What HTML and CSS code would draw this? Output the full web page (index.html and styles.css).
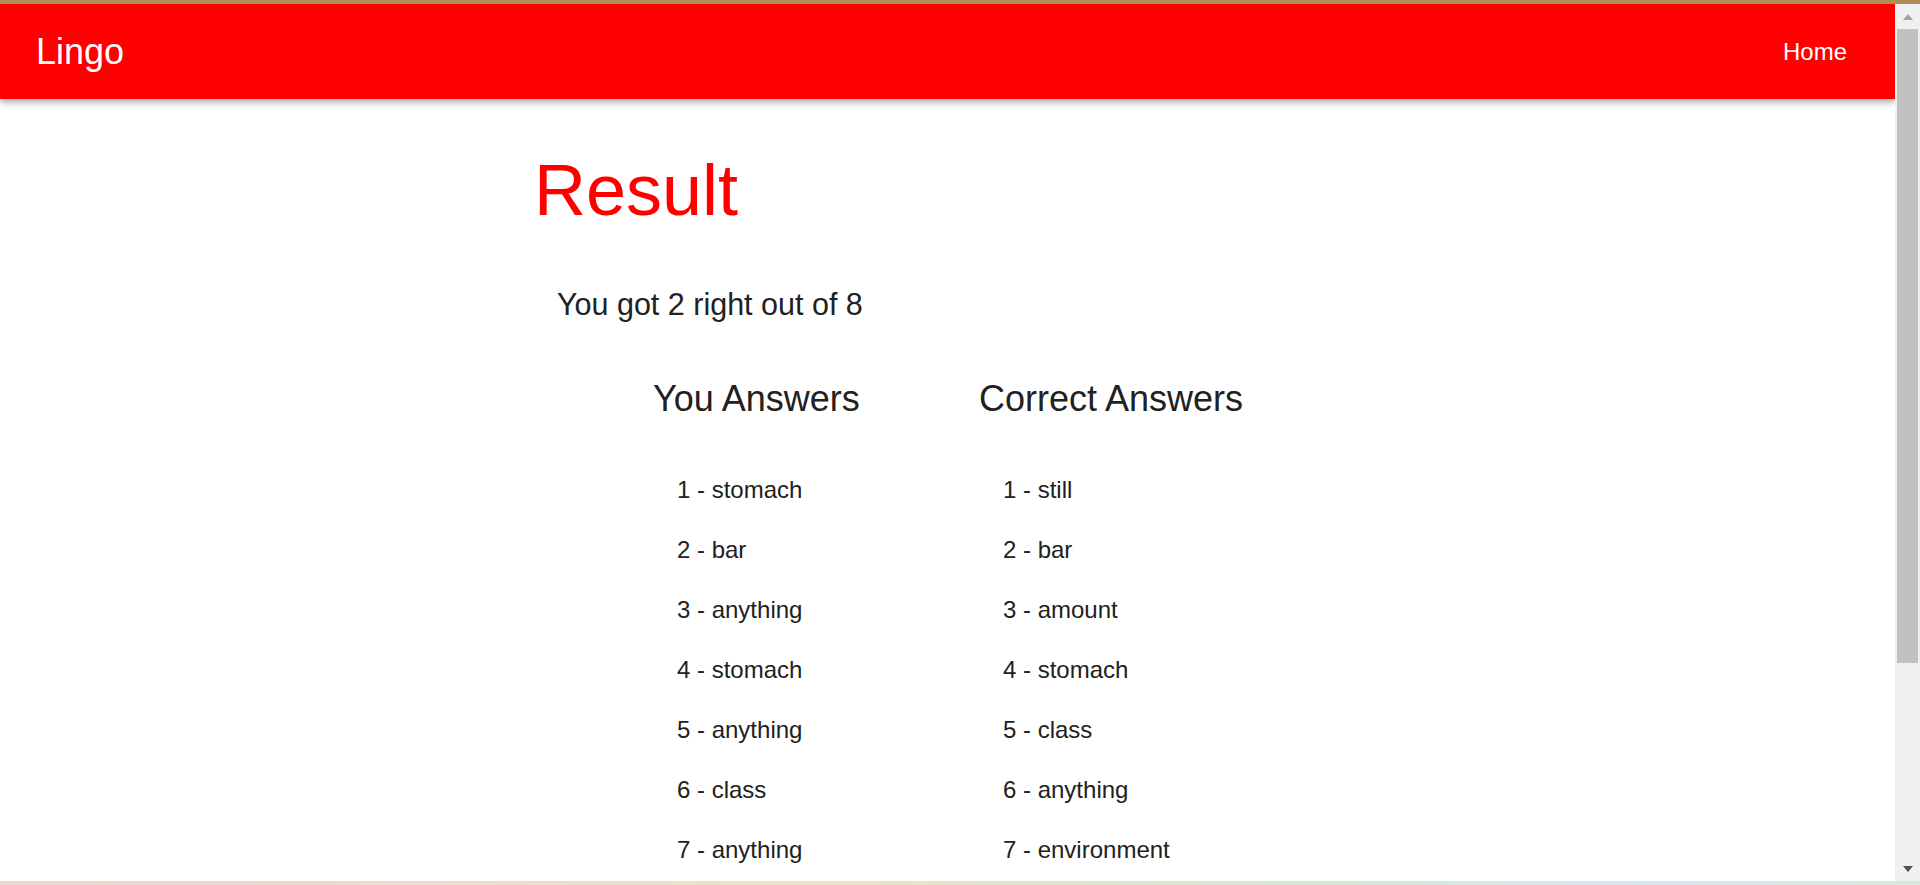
FILE: index.html
```html
<!DOCTYPE html>
<html lang="en">
<head>
<meta charset="utf-8">
<title>Lingo - Result</title>
<link rel="stylesheet" href="styles.css">
</head>
<body>
<div class="frame-top"></div>
<div class="window">
  <div class="page">
    <nav class="navbar">
      <a class="brand" href="#">Lingo</a>
      <a class="nav-link" href="#">Home</a>
    </nav>
    <main class="container">
      <h1 class="title">Result</h1>
      <p class="score">You got 2 right out of 8</p>
      <div class="columns">
        <section class="col">
          <h2 class="col-title">You Answers</h2>
          <ul class="answers">
            <li>1 - stomach</li>
            <li>2 - bar</li>
            <li>3 - anything</li>
            <li>4 - stomach</li>
            <li>5 - anything</li>
            <li>6 - class</li>
            <li>7 - anything</li>
          </ul>
        </section>
        <section class="col">
          <h2 class="col-title">Correct Answers</h2>
          <ul class="answers">
            <li>1 - still</li>
            <li>2 - bar</li>
            <li>3 - amount</li>
            <li>4 - stomach</li>
            <li>5 - class</li>
            <li>6 - anything</li>
            <li>7 - environment</li>
          </ul>
        </section>
      </div>
    </main>
  </div>
  <div class="scrollbar">
    <div class="sb-btn sb-up"><span class="arrow-up"></span></div>
    <div class="sb-thumb"></div>
    <div class="sb-track"></div>
    <div class="sb-btn sb-down"><span class="arrow-down"></span></div>
  </div>
</div>
<div class="frame-bottom"></div>
</body>
</html>
```

FILE: styles.css
```css
html, body {
  margin: 0;
  padding: 0;
  height: 885px;
  overflow: hidden;
  background: #ffffff;
  font-family: "Liberation Sans", Arial, sans-serif;
  color: #212121;
}

.frame-top {
  height: 4px;
  background: #b38b55;
}

.frame-bottom {
  height: 4px;
  background: linear-gradient(90deg, #ecd6d2 0%, #eedcc8 25%, #ece2c4 40%, #dfe6c6 55%, #d8e6d8 70%, #d4e6ee 85%, #dbe8dc 100%);
}

.window {
  display: flex;
  height: 877px;
}

.page {
  flex: 1;
  overflow: hidden;
  background: #ffffff;
}

.navbar {
  height: 95px;
  background: #ff0000;
  display: flex;
  align-items: center;
  justify-content: space-between;
  padding: 0 48px 0 36px;
  box-shadow: 0 4px 7px rgba(0, 0, 0, 0.24), 0 2px 4px rgba(0, 0, 0, 0.12);
  position: relative;
  z-index: 1;
}

.brand {
  color: #ffffff;
  text-decoration: none;
  font-size: 36px;
  line-height: 95px;
}

.nav-link {
  color: #ffffff;
  text-decoration: none;
  font-size: 24px;
  line-height: 95px;
}

.container {
  width: 827px;
  margin: 0 auto;
}

.title {
  margin: 50px 0 0 0;
  font-size: 72px;
  line-height: 82px;
  font-weight: normal;
  color: #ff0000;
}

.score {
  margin: 56px 0 0 23px;
  font-size: 30.5px;
  line-height: 34px;
}

.columns {
  display: grid;
  grid-template-columns: 326px 326px;
  margin: 58px 0 0 119px;
}

.col-title {
  margin: 0;
  font-size: 36px;
  line-height: 40px;
  font-weight: normal;
}

.answers {
  list-style: none;
  margin: 57px 0 0 0;
  padding: 0 0 0 24px;
  display: flex;
  flex-direction: column;
  gap: 32px;
  font-size: 24px;
  line-height: 28px;
}

.scrollbar {
  width: 25px;
  background: #f0f0f0;
  display: flex;
  flex-direction: column;
}

.sb-btn {
  display: flex;
  justify-content: center;
  margin-left: 1px;
}

.sb-up {
  align-items: flex-start;
  padding-top: 10px;
  height: 15px;
}

.sb-down {
  align-items: flex-end;
  padding-bottom: 9px;
  height: 16px;
}

.arrow-up {
  width: 0;
  height: 0;
  border-left: 5.5px solid transparent;
  border-right: 5.5px solid transparent;
  border-bottom: 6px solid #a3a3a3;
}

.arrow-down {
  width: 0;
  height: 0;
  border-left: 5.5px solid transparent;
  border-right: 5.5px solid transparent;
  border-top: 6px solid #505050;
}

.sb-thumb {
  height: 634px;
  margin: 0 2px;
  background: #c1c1c1;
}

.sb-track {
  flex: 1;
}
```
